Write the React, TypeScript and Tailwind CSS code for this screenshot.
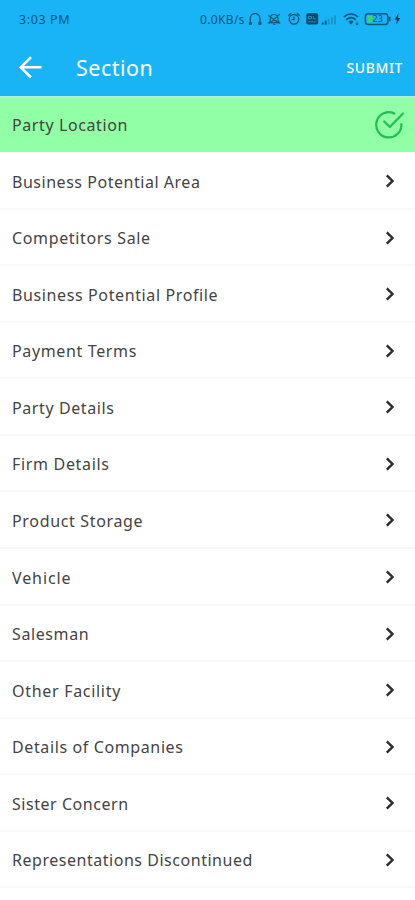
import React from 'react';

const sections = [
  { label: 'Business Potential Area', tracking: 'tracking-[0.53px]' },
  { label: 'Competitors Sale', tracking: 'tracking-[0.65px]' },
  { label: 'Business Potential Profile', tracking: 'tracking-[0.62px]' },
  { label: 'Payment Terms', tracking: 'tracking-[0.64px]' },
  { label: 'Party Details', tracking: 'tracking-[0.6px]' },
  { label: 'Firm Details', tracking: 'tracking-[0.68px]' },
  { label: 'Product Storage', tracking: 'tracking-[0.66px]' },
  { label: 'Vehicle', tracking: 'tracking-[0.9px]' },
  { label: 'Salesman', tracking: 'tracking-[0.6px]' },
  { label: 'Other Facility', tracking: 'tracking-[0.7px]' },
  { label: 'Details of Companies', tracking: 'tracking-[0.62px]' },
  { label: 'Sister Concern', tracking: 'tracking-[0.54px]' },
  { label: 'Representations Discontinued', tracking: 'tracking-[0.53px]' },
];

function StatusIcons() {
  return (
    <svg className="ml-[3px] h-5 w-[156px] shrink-0" viewBox="248 9 156 20" fill="none" stroke="#0b5577" strokeWidth="1.3">
      <path d="M250.3 23.5v-5.2a4.8 4.8 0 0 1 9.6 0v5.2" />
      <path d="M248.8 23.6h3.2M258.3 23.6h3.2" strokeWidth="2.6" />
      <path d="M270.2 21.5v-3.2c0-5 7.8-5 7.8-.2l.2 3.2 1.3 1.3h-10.8zM268.3 15.5l11.5 8M279.8 14.2l-10.5 9.5M273 24.3h2.8" strokeWidth="1.1" />
      <circle cx="294" cy="19.3" r="4.8" />
      <path d="M294 16.6v3h-2.4M288.3 15.8l2.8-2.7M296.9 13.1l2.8 2.7" />
      <rect x="306.2" y="13.3" width="12" height="11.2" rx="2" fill="#0b4a6b" stroke="none" />
      <path d="M308.5 16.5h3v2.3h-3zM313.5 16.3v2.5h2.6M308.3 21.8h7.8" stroke="#159ed5" strokeWidth="0.8" />
      <path d="M322.7 24.4v-2M325.7 24.4v-3.8" strokeWidth="2" />
      <path d="M328.8 24.4v-5.6M332 24.4v-7.3M335 24.4v-9" stroke="#1696cc" strokeWidth="2" />
      <path d="M343.8 17c4.3-4 10-4 14.3 0M346.2 19.8c3-2.7 6.6-2.7 9.6 0" strokeWidth="1.7" />
      <path d="m348.3 21.5 2.7 3 2.7-3c-1.6-1.3-3.8-1.3-5.4 0Z" fill="#0b5577" stroke="none" />
      <path d="M357 21.5v3.5M355.6 23.8l1.4 1.3 1.4-1.3" strokeWidth="0.9" />
      <rect x="365.4" y="13.7" width="22.4" height="10.8" rx="2.8" strokeWidth="1.5" />
      <rect x="367.4" y="15.7" width="5.2" height="6.8" rx="1" fill="#46d263" stroke="none" />
      <path d="M389.6 16.8v4.4" strokeWidth="1.8" />
      <text x="372.6" y="22.4" fill="#0b5577" stroke="none" className="font-['Noto_Sans',sans-serif] text-[9px]">23</text>
      <path d="m398.5 13.2-3.8 6.3h2.3l-.7 5 4-6.5h-2.3z" fill="#07364e" stroke="none" />
    </svg>
  );
}

function Chevron() {
  return (
    <svg className="mb-px mr-[19px] h-4 w-3 shrink-0" viewBox="0 0 12 16" fill="none" stroke="#2b2b2b" strokeWidth="2.4">
      <path d="M2.8 2.3 8.5 8l-5.7 5.7" />
    </svg>
  );
}

export default function App() {
  return (
    <main className="h-[900px] w-full overflow-hidden bg-white font-['Noto_Sans',sans-serif] text-[#444444]">
      <header className="h-24 bg-[#18b4f6]">
        <div className="flex h-[38px] items-center pl-[19px] text-[#0b5577]">
          <time className="w-[181px] shrink-0 pt-0.5 text-[12.5px] tracking-[0.6px]">3:03 PM</time>
          <span className="w-[45px] shrink-0 pt-0.5 text-[12px] tracking-[0.35px] whitespace-nowrap">0.0KB/s</span>
          <StatusIcons />
        </div>
        <div className="flex h-[58px] items-center pr-3 pl-[19px] text-white">
          <button aria-label="Back">
            <svg className="h-6 w-6" viewBox="0 0 24 24" fill="none" stroke="white" strokeWidth="2.6">
              <path d="M22.5 12.3H1.8M12 2.1 1.8 12.3 12 22.5" />
            </svg>
          </button>
          <h1 className="ml-[33px] pt-0.5 text-[21.5px] tracking-[0.5px]">Section</h1>
          <button className="ml-auto text-[14px] font-medium tracking-[0.6px]">SUBMIT</button>
        </div>
      </header>
      <div className="flex h-14 items-center justify-between border-t-2 border-[#a8f0d8] bg-[#90ffa5] pl-3">
        <span className="text-[16px] tracking-[0.6px]">Party Location</span>
        <svg className="mr-[10px] h-[30px] w-[31px]" viewBox="0 0 31 30" fill="none" stroke="#23bd50" strokeWidth="2.2" strokeLinecap="round" strokeLinejoin="round">
          <path d="M20.3 3.5A12.6 12.6 0 1 0 27.4 14.2M10.3 11.5l5.5 5.6L29 3.6" />
        </svg>
      </div>
      <ul className="pt-px">
        {sections.map(({ label, tracking }) => (
          <li key={label} className="flex h-[56.57px] items-center justify-between border-b-2 border-[#f8f8f8] pt-[2.6px] pl-3">
            <span className={`whitespace-nowrap text-[16px] ${tracking}`}>{label}</span>
            <Chevron />
          </li>
        ))}
      </ul>
    </main>
  );
}
